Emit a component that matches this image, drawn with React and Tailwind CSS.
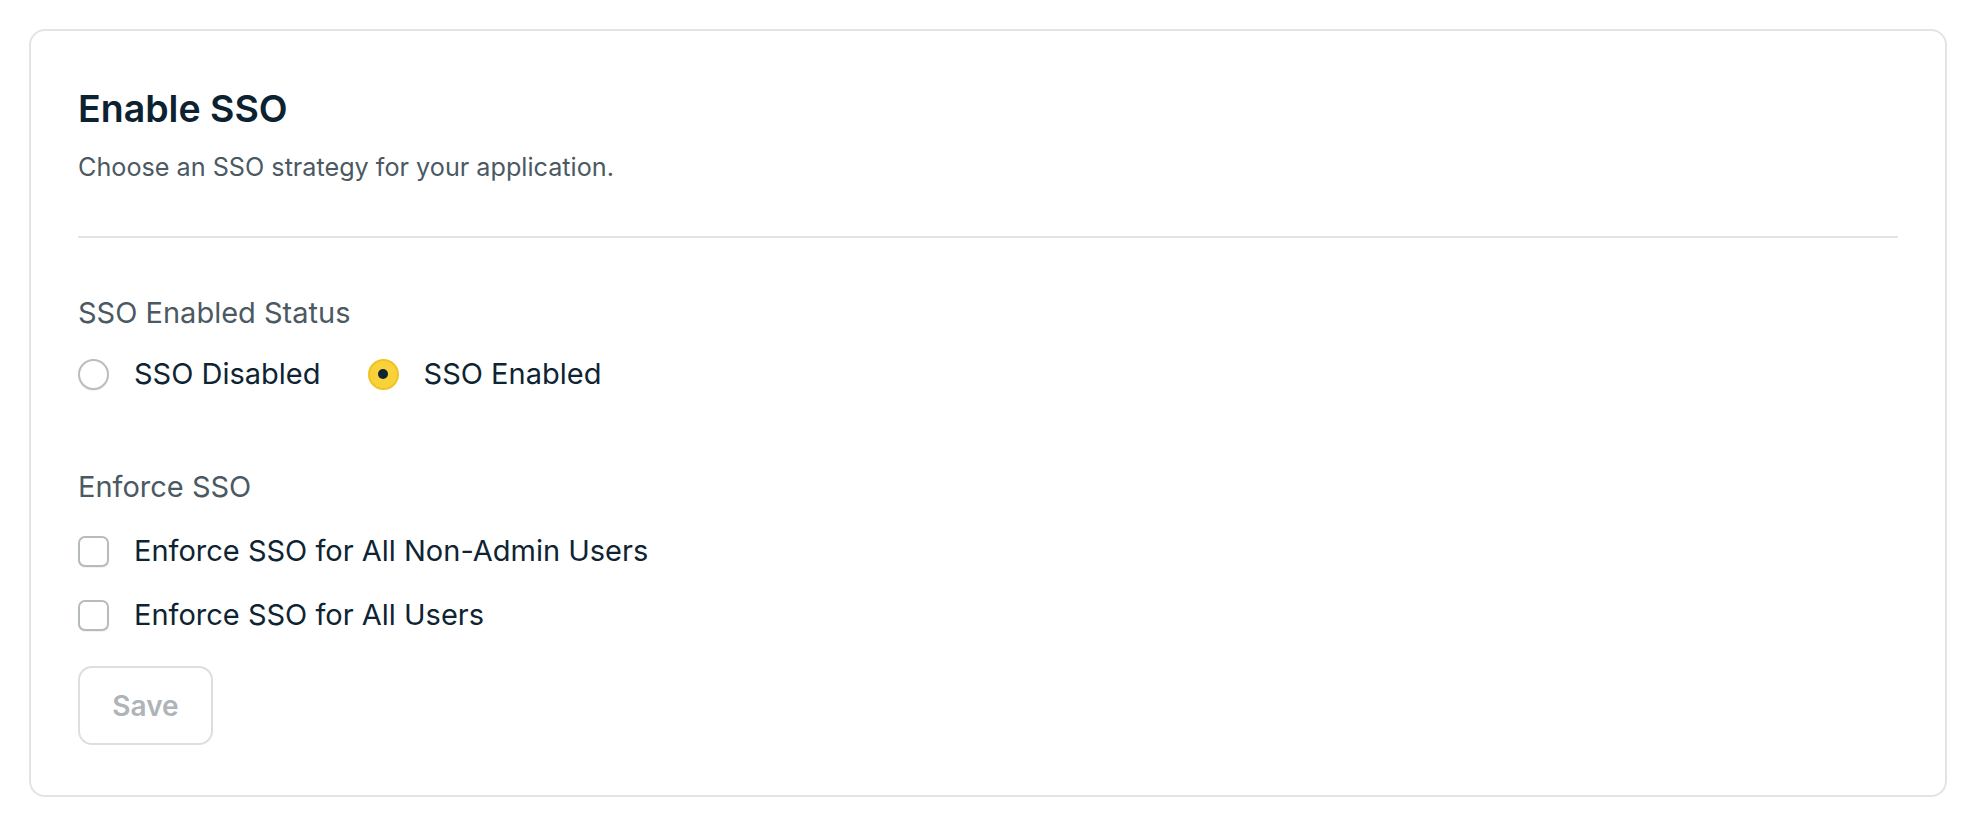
import React from "react";

function Radio({ checked, label }) {
  return (
    <label className="flex items-center gap-[25px] h-[36px]">
      {checked ? (
        <span className="flex items-center justify-center w-[31px] h-[31px] rounded-full bg-[#f9d23a] border-2 border-[#efc326]">
          <span className="w-[10px] h-[10px] rounded-full bg-[#0f2433]" />
        </span>
      ) : (
        <span className="w-[31px] h-[31px] rounded-full border-2 border-[#b9bdc0] bg-white shadow-[0_1px_1px_rgba(0,0,0,0.06)]" />
      )}
      <span className="text-[29px] leading-[36px] text-[#0f2433]">{label}</span>
    </label>
  );
}

function Checkbox({ label }) {
  return (
    <label className="flex items-center gap-[25px] h-[36px]">
      <span className="w-[31px] h-[31px] rounded-[7px] border-2 border-[#b6bbbe] bg-white shadow-[0_1px_1px_rgba(0,0,0,0.06)]" />
      <span className="text-[29px] leading-[36px] text-[#0f2433]">{label}</span>
    </label>
  );
}

export default function App() {
  return (
    <div className="min-h-screen bg-white pl-[29px] pr-[25px] pt-[29px] pb-[26px] font-['Inter',sans-serif]">
      <div className="rounded-[16px] border-2 border-[#e4e4e4] bg-white px-[47px] pt-[56px] pb-[50px]">
        {/* Header */}
        <h1 className="text-[37.5px] leading-[44px] font-semibold text-[#0d2230]">Enable SSO</h1>
        <p className="mt-[20px] text-[25.2px] leading-[32px] text-[#4b5963]">
          Choose an SSO strategy for your application.
        </p>
        <div className="mt-[53px] h-[2px] bg-[#e4e4e4]" />

        {/* Status */}
        <p className="mt-[58px] text-[29px] leading-[34px] text-[#4b5963]">SSO Enabled Status</p>
        <div className="mt-[26px] flex items-center gap-[47px]">
          <Radio label="SSO Disabled" />
          <Radio checked label="SSO Enabled" />
        </div>

        {/* Enforce */}
        <p className="mt-[78px] text-[29px] leading-[34px] text-[#4b5963]">Enforce SSO</p>
        <div className="mt-[29px] flex flex-col gap-[28px]">
          <Checkbox label="Enforce SSO for All Non-Admin Users" />
          <Checkbox label="Enforce SSO for All Users" />
        </div>

        <button
          disabled
          className="mt-[33px] w-[135px] h-[79px] rounded-[14px] border-2 border-[#dedede] bg-white text-[28px] font-semibold text-[#aeb4b7]"
        >
          Save
        </button>
      </div>
    </div>
  );
}
